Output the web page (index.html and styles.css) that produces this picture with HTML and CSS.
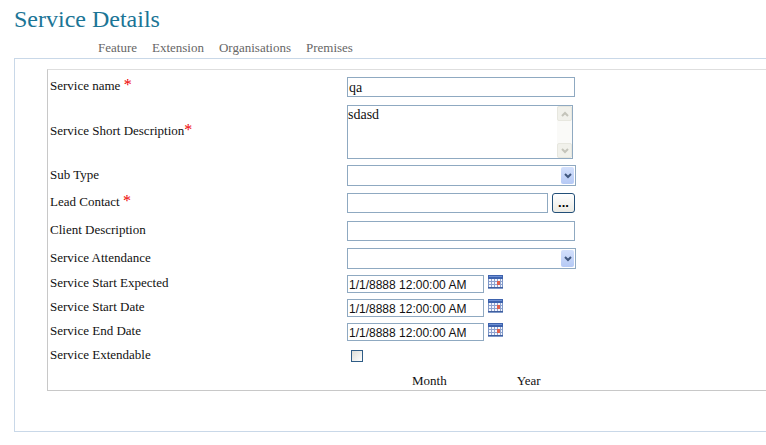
FILE: index.html
```html
<!DOCTYPE html>
<html lang="en">
<head>
<meta charset="utf-8">
<title>Service Details</title>
<link rel="stylesheet" href="styles.css">
</head>
<body>
<svg class="defs" aria-hidden="true">
  <symbol id="calendar" viewBox="0 0 15 14">
    <rect width="15" height="14" fill="#7f98c8"/>
    <rect width="15" height="4" fill="#3d62ad"/>
    <path d="M1 1.500H14" stroke="#6f91d5"/>
    <path d="M1 4h13v8H1z" fill="#f3f6fd"/>
    <path d="M3.500 4v8M6.500 4v8M9.500 4v8M12.500 4v8M1 6.500h13M1 9.500h13" stroke="#8fa3cf"/>
    <path d="M9 6h3v4H9z" fill="#e0604c"/>
    <path d="M0 12.500h15" stroke="#3f5f9f"/>
  </symbol>
  <symbol id="chevron" viewBox="0 0 8 6">
    <path d="M1 1l3 3 3-3" fill="none" stroke="currentColor" stroke-width="2"/>
  </symbol>
</svg>
<main>
  <h1>Service Details</h1>
  <nav class="tabs">
    <a href="#feature">Feature</a>
    <a href="#extension">Extension</a>
    <a href="#organisations">Organisations</a>
    <a href="#premises">Premises</a>
  </nav>
  <section class="panel">
    <form class="details">
      <div class="row first">
        <label for="name">Service name <span class="req">*</span></label>
        <input class="field" id="name" type="text" value="qa">
      </div>
      <div class="row tall">
        <label for="short">Service Short Description<span class="req">*</span></label>
        <div class="area">
          <textarea id="short">sdasd</textarea>
          <div class="scroll" aria-hidden="true">
            <span><svg class="up"><use href="#chevron"/></svg></span>
            <span><svg><use href="#chevron"/></svg></span>
          </div>
        </div>
      </div>
      <div class="row pick">
        <label for="subtype">Sub Type</label>
        <div class="select">
          <select id="subtype"><option></option></select>
          <span class="arrow"><svg><use href="#chevron"/></svg></span>
        </div>
      </div>
      <div class="row">
        <label for="lead">Lead Contact <span class="req">*</span></label>
        <div class="lookup">
          <input class="field" id="lead" type="text">
          <button type="button" aria-label="Find contact">...</button>
        </div>
      </div>
      <div class="row">
        <label for="client">Client Description</label>
        <input class="field" id="client" type="text">
      </div>
      <div class="row pick">
        <label for="attendance">Service Attendance</label>
        <div class="select">
          <select id="attendance"><option></option></select>
          <span class="arrow"><svg><use href="#chevron"/></svg></span>
        </div>
      </div>
      <div class="row short">
        <label for="expected">Service Start Expected</label>
        <div class="date">
          <input id="expected" type="text" value="1/1/8888 12:00:00 AM">
          <svg><use href="#calendar"/></svg>
        </div>
      </div>
      <div class="row short">
        <label for="start">Service Start Date</label>
        <div class="date">
          <input id="start" type="text" value="1/1/8888 12:00:00 AM">
          <svg><use href="#calendar"/></svg>
        </div>
      </div>
      <div class="row short">
        <label for="end">Service End Date</label>
        <div class="date">
          <input id="end" type="text" value="1/1/8888 12:00:00 AM">
          <svg><use href="#calendar"/></svg>
        </div>
      </div>
      <div class="row short">
        <label for="extendable">Service Extendable</label>
        <input class="check" id="extendable" type="checkbox">
      </div>
      <div class="row last">
        <div class="period"><span>Month</span><span>Year</span></div>
      </div>
    </form>
  </section>
</main>
</body>
</html>
```
FILE: styles.css
```css
* { box-sizing: border-box; }

body {
  margin: 0;
  background: #fff;
  color: #111;
  font: 13px/16px "Liberation Serif", serif;
}

.defs { position: absolute; width: 0; height: 0; }

main { padding: 4px 0 12px 14px; }

h1 {
  margin: 0;
  color: #1b7596;
  font-size: 24px;
  line-height: 30px;
  font-weight: 400;
}

.tabs {
  display: flex;
  gap: 15px;
  padding: 6px 0 2px 84px;
}

.tabs a { color: #666; text-decoration: none; }

.panel {
  border: 1px solid #c9d8e8;
  border-right: 0;
  padding: 10px 0 40px 32px;
}

.details {
  border: 1px solid #c8c8c8;
  border-top-color: #dedede;
  border-right: 0;
}

.row {
  display: grid;
  grid-template-columns: 297px 1fr;
  align-items: center;
  min-height: 28px;
  padding-left: 2px;
}

.row.first { min-height: 32px; padding-top: 2px; }
.row.tall { min-height: 60px; }
.row.pick { min-height: 27px; }
.row.short { min-height: 24px; }
.row.last { min-height: 22px; padding-top: 4px; }

label { padding-bottom: 2px; }
.req { color: #e00; font-size: 16px; line-height: 14px; }

input, textarea, select {
  margin: 0;
  border: 1px solid #8fa9c1;
  border-radius: 0;
  background: #fff;
  color: #111;
  font: 14px/16px "Liberation Serif", serif;
}

.field { width: 228px; height: 20px; padding: 2px 1px 0; }

.area { position: relative; width: 226px; height: 54px; }

textarea {
  display: block;
  width: 100%;
  height: 100%;
  padding: 1px 18px 0 0;
  resize: none;
  overflow: hidden;
}

.scroll {
  position: absolute;
  top: 1px;
  right: 1px;
  bottom: 1px;
  width: 15px;
  display: flex;
  flex-direction: column;
  justify-content: space-between;
  background: #fafaf8;
  color: #c4c4ba;
}

.scroll span {
  display: grid;
  place-items: center;
  height: 15px;
  border: 1px solid #e7e7df;
  border-radius: 2px;
  background: #f1f1eb;
}

.scroll svg, .arrow svg { width: 8px; height: 6px; }
.up { transform: rotate(180deg); }

.select { position: relative; width: 229px; height: 21px; }

select {
  display: block;
  width: 100%;
  height: 100%;
  appearance: none;
}

.arrow {
  position: absolute;
  top: 2px;
  right: 2px;
  bottom: 2px;
  width: 13px;
  display: grid;
  place-items: center;
  border-radius: 2px;
  background: linear-gradient(#d3e0fc, #b5c9f5);
  color: #40577f;
  pointer-events: none;
}

.lookup { display: flex; gap: 4px; }
.lookup .field { width: 201px; }

button {
  width: 23px;
  height: 20px;
  padding: 0;
  border: 1px solid #224f78;
  border-radius: 3px;
  background: linear-gradient(#fff, #ecebe4);
  color: #000;
  font: bold 13px/16px "Liberation Sans", sans-serif;
}

.date { display: flex; gap: 4px; }

.date input {
  width: 137px;
  height: 18px;
  padding: 1px 1px 0;
  font: 12px/14px "Liberation Sans", sans-serif;
}

.date svg { width: 15px; height: 14px; }

.check {
  appearance: none;
  width: 12px;
  height: 12px;
  margin-left: 4px;
  border-color: #2f5c86;
  background: linear-gradient(135deg, #dcdcd6, #fff);
}

.period {
  grid-column: 2;
  display: flex;
  gap: 70px;
  padding-left: 65px;
}
```
